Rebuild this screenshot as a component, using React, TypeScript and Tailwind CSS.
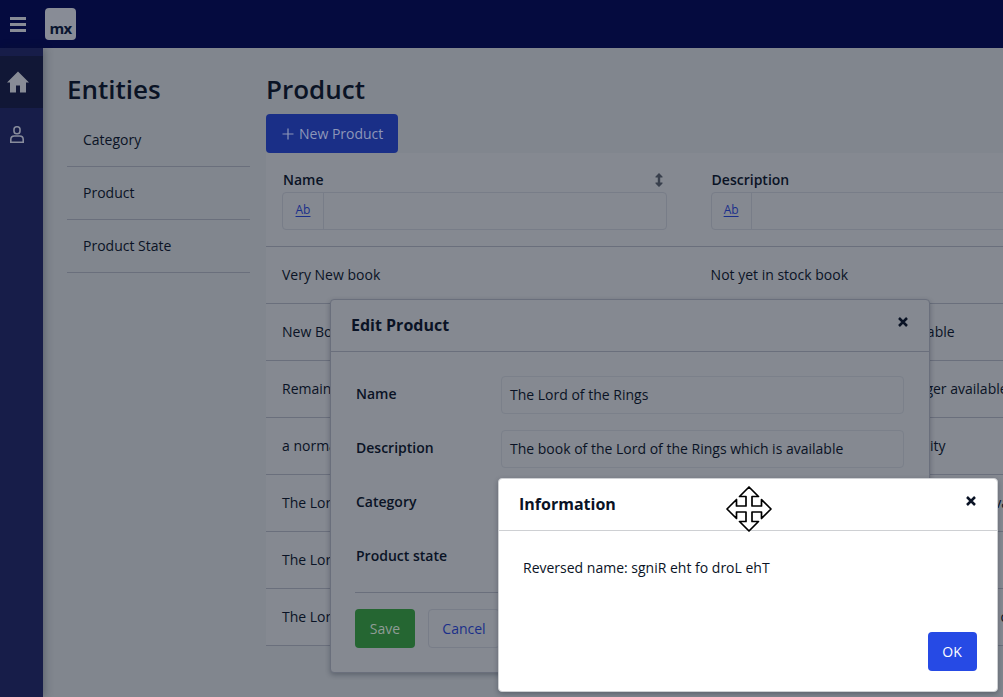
import React from "react";

const entities = ["Category", "Product", "Product State"];

const rows = [
  { name: "Very New book", description: "Not yet in stock book", width: "w-auto" },
  { name: "New Book", description: "The new book which is available", width: "w-[244px] text-right" },
  { name: "Remaining book", description: "The book which is no longer available", width: "w-[297px] text-right" },
  { name: "a normal book", description: "A normal book in high quantity", width: "w-[235px] text-right" },
  { name: "The Lord of the Rings", description: "The book of the Lord of the Rings which is available", width: "w-auto" },
  { name: "The Lord of the Rings", description: "The second book of the Lord", width: "w-auto" },
  { name: "The Lord of the Rings", description: "The third book of the Lord of the Rings on", width: "w-[307px] text-right" },
];

function CloseIcon() {
  return (
    <svg width="10" height="10" viewBox="0 0 10 10" className="block">
      <path d="M1 1L9 9M9 1L1 9" stroke="#0a1325" strokeWidth="2.5" />
    </svg>
  );
}

function Filter({ toggleClass }: { toggleClass: string }) {
  return (
    <div className="flex h-[38px] w-[385px] rounded border border-[#787d88]">
      <div className={"border-r border-[#787d88] pt-[8px] text-center text-[12px] font-medium leading-[18px] text-[#1a2f8a] underline underline-offset-2 " + toggleClass}>
        Ab
      </div>
    </div>
  );
}

function Field({ label, value }: { label: string; value: string }) {
  return (
    <div className="flex h-[54px] items-start">
      <div className="w-[145px] pt-[8px] font-semibold leading-5">{label}</div>
      <div className="flex h-[38px] w-[403px] items-center rounded border border-[#7b808a] px-2">{value}</div>
    </div>
  );
}

export default function App() {
  return (
    <div className="relative flex h-[697px] w-[1003px] flex-col overflow-hidden bg-[#81868e] font-['Open_Sans',sans-serif] text-[14px] leading-5 text-[#0a1325]">
      <header className="flex h-12 shrink-0 items-center bg-[#050b3f]">
        <svg width="16" height="15" viewBox="0 0 16 15" className="ml-[10px]">
          <path d="M0 1.5H16M0 7.5H16M0 13.5H16" stroke="#888c96" strokeWidth="3" />
        </svg>
        <div className="ml-[19px] flex h-8 w-[31px] items-end justify-center rounded bg-[#888c96] pb-[3px] text-[15px] font-bold leading-[18px] tracking-[-0.7px] text-[#0a1530]">mx</div>
      </header>
      <div className="flex min-h-0 flex-1">
        <nav className="z-10 w-[43px] shrink-0 bg-[#171d49] pt-2 shadow-[2px_0_8px_rgba(10,19,37,0.3)]">
          <div className="flex h-[52px] items-center bg-[#111736] pl-[7px]">
            <svg width="22" height="22" viewBox="0 0 22 22">
              <path d="M11 0.5L22 11.5H19V21.5H13V14.5H9V21.5H3V11.5H0Z" fill="#888c96" />
            </svg>
          </div>
          <div className="flex h-[52px] items-center pl-[10px] pt-[2px]">
            <svg width="14" height="18" viewBox="0 0 14 18" fill="none" stroke="#888c9c" strokeWidth="1.6">
              <rect x="4" y="0.8" width="6" height="7" rx="2.7" />
              <path d="M0.8 16.3V13.5Q0.8 10 4.3 10H9.7Q13.2 10 13.2 13.5V16.3Z" />
            </svg>
          </div>
        </nav>
        <aside className="ml-6 mt-[23px] w-[183px] shrink-0">
          <h1 className="h-[43px] text-[26px] font-semibold leading-[36px]">Entities</h1>
          {entities.map((item) => (
            <div key={item} className="flex h-[53px] items-center border-b border-[#6a6f7c] px-4">{item}</div>
          ))}
        </aside>
        <main className="ml-4 mt-[23px] w-[900px] shrink-0">
          <h1 className="h-[43px] text-[26px] font-semibold leading-[36px]">Product</h1>
          <button className="flex h-[39px] w-[132px] items-center rounded bg-[#1a2f87] pl-4 text-[#8d96b8]">
            <svg width="12" height="12" viewBox="0 0 12 12" className="mr-[5px]">
              <path d="M6 0.5V11.5M0.5 6H11.5" stroke="currentColor" strokeWidth="1.2" />
            </svg>
            New Product
          </button>
          <div className="bg-[#858991]">
            <div className="flex h-[94px] border-b border-[#6a6f7c] pl-4 pt-[17px]">
              <div className="w-[428.6px]">
                <div className="flex h-[22px] w-[381px] items-start justify-between pl-px font-semibold">
                  Name
                  <svg width="8" height="14" viewBox="0 0 8 14" className="mt-[3px]">
                    <path d="M4 0L7.5 3.5V4.5H5.2V9.5H7.5V10.5L4 14L0.5 10.5V9.5H2.8V4.5H0.5V3.5Z" fill="#39404d" />
                  </svg>
                </div>
                <Filter toggleClass="w-[41px]" />
              </div>
              <div>
                <div className="h-[22px] pl-px font-semibold">Description</div>
                <Filter toggleClass="w-[40px]" />
              </div>
            </div>
            {rows.map((row, i) => (
              <div key={i} className="flex h-[57px] items-center border-b border-[#6a6f7c] pl-4">
                <div className="w-[428.6px]">{row.name}</div>
                <div className={"whitespace-nowrap " + row.width}>{row.description}</div>
              </div>
            ))}
          </div>
        </main>
      </div>

      <section className="absolute left-[330px] top-[299px] z-20 h-[374px] w-[600px] rounded border border-[#6a6f7c] bg-[#858991] shadow-[0_2px_5px_rgba(10,19,37,0.3)]">
        <div className="flex h-[52px] items-center justify-between border-b border-[#6a6f7c] pb-[2px] pl-5 pr-[21px]">
          <h2 className="text-[16px] font-bold">Edit Product</h2>
          <div className="-mt-[5px]"><CloseIcon /></div>
        </div>
        <div className="px-[25px] pt-6">
          <Field label="Name" value="The Lord of the Rings" />
          <Field label="Description" value="The book of the Lord of the Rings which is available" />
          <Field label="Category" value="" />
          <Field label="Product state" value="" />
        </div>
        <div className="mx-6 flex gap-[13px] border-t border-[#6a6f7c] pt-4">
          <button className="h-[39px] w-[60px] rounded bg-[#256632] text-[#8f9c96]">Save</button>
          <button className="h-[39px] w-[72px] rounded border border-[#787d88] text-[#1a2f8a]">Cancel</button>
        </div>
      </section>

      <section className="absolute left-[498px] top-[478px] z-30 h-[214px] w-[500px] rounded border border-[#ced0d3] bg-white shadow-[0_2px_5px_rgba(10,19,37,0.3)]">
        <div className="flex h-[52px] items-center justify-between border-b border-[#ced0d3] pb-[2px] pl-5 pr-[21px]">
          <h2 className="text-[16px] font-bold">Information</h2>
          <div className="-mt-[5px]"><CloseIcon /></div>
        </div>
        <div className="flex h-[160px] flex-col items-start justify-between px-5 pb-5 pt-[27px]">
          <p className="pl-1">Reversed name: sgniR eht fo droL ehT</p>
          <button className="h-[39px] w-[49px] self-end rounded bg-[#264ae5] pr-px text-white">OK</button>
        </div>
      </section>

      <svg className="absolute left-[725px] top-[485px] z-40" width="48" height="48" viewBox="0 0 48 48">
        <path d="M24 2L33.5 11.5H27V21H36.5V14.5L46 24L36.5 33.5V27H27V36.5H33.5L24 46L14.5 36.5H21V27H11.5V33.5L2 24L11.5 14.5V21H21V11.5H14.5Z" fill="white" stroke="black" strokeWidth="1.7" strokeLinejoin="round" />
      </svg>
    </div>
  );
}
